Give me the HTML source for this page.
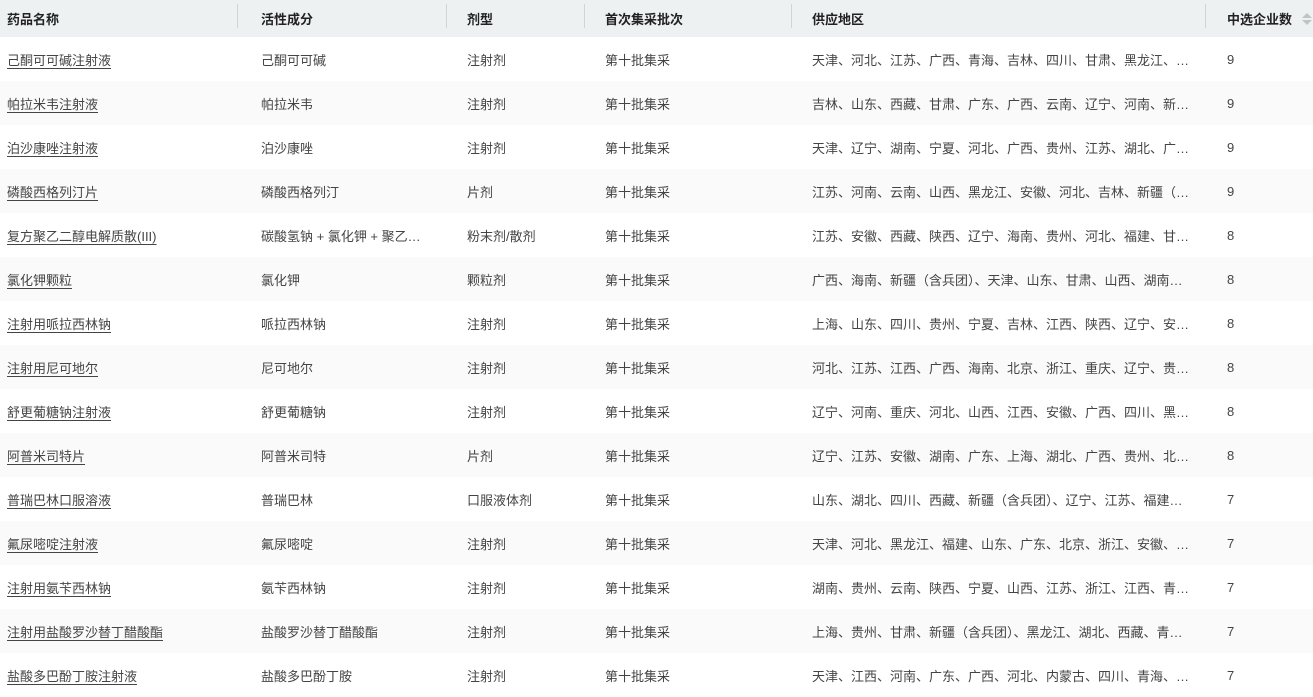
<!DOCTYPE html>
<html><head><meta charset="utf-8"><style>
*{margin:0;padding:0;box-sizing:border-box}
body{width:1313px;height:686px;overflow:hidden;background:#fff;font-family:"Liberation Sans","Noto Sans CJK SC",sans-serif;font-size:13px;color:#333}
table{border-collapse:collapse;table-layout:fixed;width:1313px}
th{height:37px;background:#eef1f2;text-align:left;font-weight:bold;color:#222;position:relative;padding-left:8px}
th .sep{position:absolute;right:0;top:4px;height:24px;border-right:1px solid #d0d6d8}
td{height:44px;padding-left:8px;white-space:nowrap;overflow:hidden;text-overflow:ellipsis;color:#444}
tr:nth-child(even) td{background:#fafafa}
td a{color:#444;text-decoration:underline;text-underline-offset:3px}
.sort{position:absolute;left:95px;top:10px}
</style></head><body>
<table>
<colgroup><col style="width:238px"><col style="width:209px"><col style="width:138px"><col style="width:207px"><col style="width:414px"><col style="width:107px"></colgroup>
<thead><tr>
<th style="padding-left:7px">药品名称<span class="sep"></span></th>
<th style="padding-left:23px">活性成分<span class="sep"></span></th>
<th style="padding-left:20px">剂型<span class="sep"></span></th>
<th style="padding-left:20px">首次集采批次<span class="sep"></span></th>
<th style="padding-left:20px">供应地区<span class="sep"></span></th>
<th style="padding-left:21px">中选企业数<svg class="sort" width="12" height="18" viewBox="0 0 12 18"><path d="M1 8L6 3L11 8Z" fill="#c0c4c8"/><path d="M1 10L6 15L11 10Z" fill="#c0c4c8"/></svg></th>
</tr></thead>
<tbody>
</tbody></table>
<script>
const rows=[
["己酮可可碱注射液","己酮可可碱","注射剂","天津、河北、江苏、广西、青海、吉林、四川、甘肃、黑龙江、…","9"],
["帕拉米韦注射液","帕拉米韦","注射剂","吉林、山东、西藏、甘肃、广东、广西、云南、辽宁、河南、新…","9"],
["泊沙康唑注射液","泊沙康唑","注射剂","天津、辽宁、湖南、宁夏、河北、广西、贵州、江苏、湖北、广…","9"],
["磷酸西格列汀片","磷酸西格列汀","片剂","江苏、河南、云南、山西、黑龙江、安徽、河北、吉林、新疆（…","9"],
["复方聚乙二醇电解质散(III)","碳酸氢钠 + 氯化钾 + 聚乙…","粉末剂/散剂","江苏、安徽、西藏、陕西、辽宁、海南、贵州、河北、福建、甘…","8"],
["氯化钾颗粒","氯化钾","颗粒剂","广西、海南、新疆（含兵团）、天津、山东、甘肃、山西、湖南…","8"],
["注射用哌拉西林钠","哌拉西林钠","注射剂","上海、山东、四川、贵州、宁夏、吉林、江西、陕西、辽宁、安…","8"],
["注射用尼可地尔","尼可地尔","注射剂","河北、江苏、江西、广西、海南、北京、浙江、重庆、辽宁、贵…","8"],
["舒更葡糖钠注射液","舒更葡糖钠","注射剂","辽宁、河南、重庆、河北、山西、江西、安徽、广西、四川、黑…","8"],
["阿普米司特片","阿普米司特","片剂","辽宁、江苏、安徽、湖南、广东、上海、湖北、广西、贵州、北…","8"],
["普瑞巴林口服溶液","普瑞巴林","口服液体剂","山东、湖北、四川、西藏、新疆（含兵团）、辽宁、江苏、福建…","7"],
["氟尿嘧啶注射液","氟尿嘧啶","注射剂","天津、河北、黑龙江、福建、山东、广东、北京、浙江、安徽、…","7"],
["注射用氨苄西林钠","氨苄西林钠","注射剂","湖南、贵州、云南、陕西、宁夏、山西、江苏、浙江、江西、青…","7"],
["注射用盐酸罗沙替丁醋酸酯","盐酸罗沙替丁醋酸酯","注射剂","上海、贵州、甘肃、新疆（含兵团）、黑龙江、湖北、西藏、青…","7"],
["盐酸多巴酚丁胺注射液","盐酸多巴酚丁胺","注射剂","天津、江西、河南、广东、广西、河北、内蒙古、四川、青海、…","7"]];
const tb=document.querySelector('tbody');
rows.forEach(r=>{tb.insertAdjacentHTML('beforeend',`<tr><td style="padding-left:7px"><a>${r[0]}</a></td><td style="padding-left:23px">${r[1]}</td><td style="padding-left:20px">${r[2]}</td><td style="padding-left:20px">第十批集采</td><td style="padding-left:20px">${r[3]}</td><td style="padding-left:21px">${r[4]}</td></tr>`)});
</script>
</body></html>
